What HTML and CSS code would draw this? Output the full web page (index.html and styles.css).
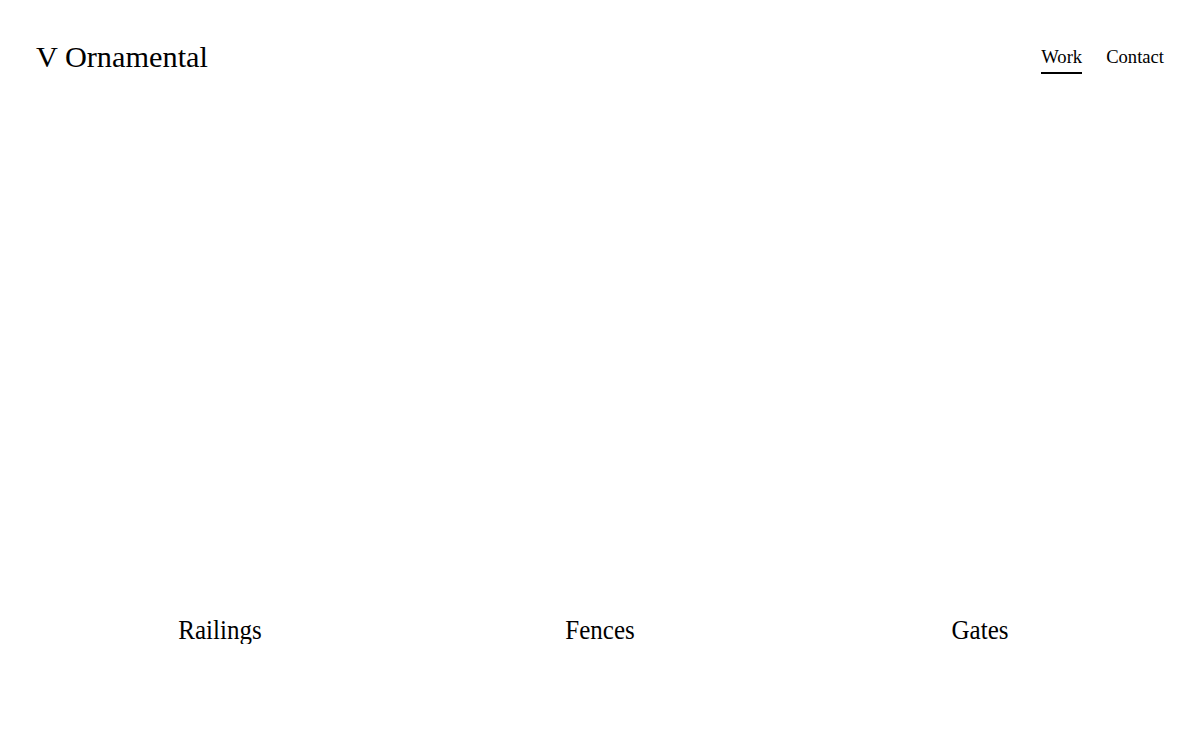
FILE: index.html
```html
<!DOCTYPE html>
<html lang="en">
<head>
    <meta charset="UTF-8">
    <meta name="viewport" content="width=device-width, initial-scale=1.0">
    <title>V Ornamental</title>
    <link rel="stylesheet" href="styles.css">
</head>
<body>

<header class="site-header">
    <a class="logo" href="#">V Ornamental</a>
    <nav class="site-nav">
        <a class="active" href="#work">Work</a>
        <a href="#contact">Contact</a>
    </nav>
</header>

<main id="work" class="work">
    <div class="hero"></div>
    <section class="categories">
        <a class="category" href="#railings">Railings</a>
        <a class="category" href="#fences">Fences</a>
        <a class="category" href="#gates">Gates</a>
    </section>
</main>

</body>
</html>
```

FILE: styles.css
```css
body {
    font-family: "Liberation Serif", "Times New Roman", serif;
    margin: 0;
    padding: 0;
    background-color: #fff;
    color: #000;
}
a {
    color: inherit;
    text-decoration: none;
}
.site-header {
    display: flex;
    justify-content: space-between;
    align-items: center;
    padding: 38px 36px 0;
    height: 38px;
}
.logo {
    font-size: 30.3px;
}
.site-nav {
    display: flex;
    gap: 24px;
    font-size: 18.6px;
    padding-top: 6px;
}
.site-nav a {
    padding-bottom: 4px;
    border-bottom: 2px solid transparent;
}
.site-nav a.active {
    border-bottom-color: #000;
}
.hero {
    height: 540px;
}
.categories {
    display: grid;
    grid-template-columns: repeat(3, 1fr);
    padding: 0 30px;
}
.category {
    text-align: center;
    font-size: 25px;
    transform: scaleY(1.12);
}
```
